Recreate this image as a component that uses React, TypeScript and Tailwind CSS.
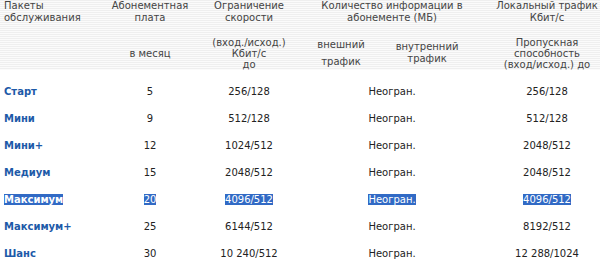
import React from 'react';

interface Tariff {
  name: string;
  fee: string;
  speed: string;
  local: string;
  selected?: boolean;
}

const tariffs: Tariff[] = [
  { name: 'Старт', fee: '5', speed: '256/128', local: '256/128' },
  { name: 'Мини', fee: '9', speed: '512/128', local: '512/128' },
  { name: 'Мини+', fee: '12', speed: '1024/512', local: '2048/512' },
  { name: 'Медиум', fee: '15', speed: '2048/512', local: '2048/512' },
  { name: 'Максимум', fee: '20', speed: '4096/512', local: '4096/512', selected: true },
  { name: 'Максимум+', fee: '25', speed: '6144/512', local: '8192/512' },
  { name: 'Шанс', fee: '30', speed: '10 240/512', local: '12 288/1024' },
];

const Sel: React.FC<{ on?: boolean; children: React.ReactNode }> = ({ on, children }) =>
  on ? <span className="bg-[#316ac5] text-white">{children}</span> : <>{children}</>;

export default function App() {
  return (
    <div className="w-[600px] h-[260px] overflow-hidden bg-white font-['DejaVu_Sans',Verdana,sans-serif] text-[10px]">
      <table className="w-[600px] table-fixed border-collapse">
        <colgroup>
          <col className="w-[100px]" />
          <col className="w-[100px]" />
          <col className="w-[98px]" />
          <col className="w-[86px]" />
          <col className="w-[86px]" />
          <col className="w-[130px]" />
        </colgroup>
        <thead className="bg-[repeating-linear-gradient(to_bottom,#efefef_0px,#efefef_1px,#fbfbfb_1px,#fbfbfb_2px)] text-[#444] leading-[12px]">
          <tr className="h-[36px] align-top">
            <td rowSpan={2} className="pl-1 text-left">
              Пакеты
              <br />
              обслуживания
            </td>
            <td className="text-center">
              Абонементная
              <br />
              плата
            </td>
            <td className="text-center">
              Ограничение
              <br />
              скорости
            </td>
            <td colSpan={2} className="text-center pl-4">
              Количество информации в
              <br />
              абонементе (МБ)
            </td>
            <td className="text-center pl-6 whitespace-nowrap">
              Локальный трафик
              <br />
              Кбит/с
            </td>
          </tr>
          <tr className="h-[34px] align-middle leading-[11px]">
            <td className="text-center">в месяц</td>
            <td className="text-center">
              (вход./исход.)
              <br />
              Кбит/с
              <br />
              до
            </td>
            <td className="text-center leading-[17px]">
              внешний
              <br />
              трафик
            </td>
            <td className="text-center leading-[12px]">
              внутренний
              <br />
              трафик
            </td>
            <td className="text-center pl-6 whitespace-nowrap">
              Пропускная
              <br />
              способность
              <br />
              (вход/исход.) до
            </td>
          </tr>
        </thead>
        <tbody className="text-[#222]">
          <tr className="h-[8px]">
            <td colSpan={6} />
          </tr>
          {tariffs.map((t) => (
            <tr key={t.name} className="h-[27px] align-middle">
              <td className="pl-1 text-left font-bold text-[#1d5aa8]">
                <Sel on={t.selected}>{t.name}</Sel>
              </td>
              <td className="text-center">
                <Sel on={t.selected}>{t.fee}</Sel>
              </td>
              <td className="text-center">
                <Sel on={t.selected}>{t.speed}</Sel>
              </td>
              <td colSpan={2} className="text-center pl-4">
                <Sel on={t.selected}>Неогран.</Sel>
              </td>
              <td className="text-center pl-6">
                <Sel on={t.selected}>{t.local}</Sel>
              </td>
            </tr>
          ))}
        </tbody>
      </table>
    </div>
  );
}
